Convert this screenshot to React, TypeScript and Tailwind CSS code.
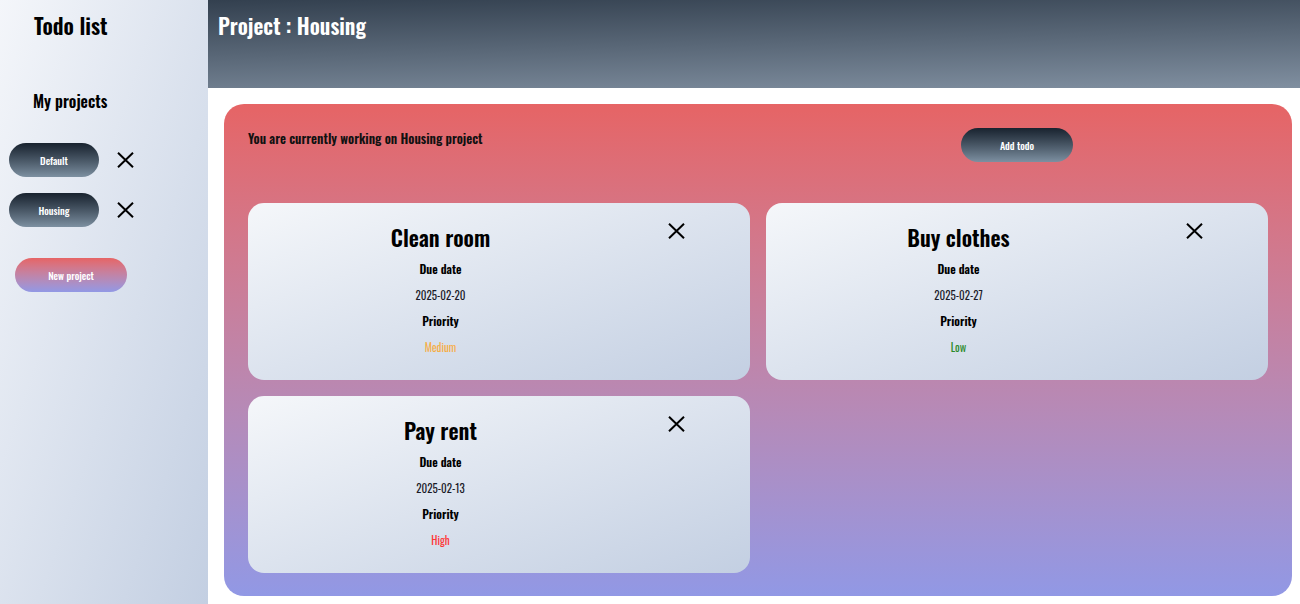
import React from "react";

function XIcon({ className = "" }: { className?: string }) {
  return (
    <svg width="17" height="16" viewBox="0 0 17 16" className={className}>
      <path d="M1 0.8 L16 15.2 M16 0.8 L1 15.2" stroke="#000" strokeWidth="2" fill="none" />
    </svg>
  );
}

const pillDark =
  "bg-linear-to-b from-[#19232f] to-[#7d90a1] text-white rounded-full flex items-center justify-center font-medium";

type Todo = { title: string; date: string; priority: string; color: string };

const todos: Todo[] = [
  { title: "Clean room", date: "2025-02-20", priority: "Medium", color: "text-[#f6ad45]" },
  { title: "Buy clothes", date: "2025-02-27", priority: "Low", color: "text-[#2b8a2b]" },
  { title: "Pay rent", date: "2025-02-13", priority: "High", color: "text-[#ff3535]" },
];

function Card({ t }: { t: Todo }) {
  return (
    <div className="h-[177px] rounded-2xl bg-linear-to-br from-[#f5f7fa] to-[#c3cfe2] flex">
      <div className="w-[385px] flex flex-col items-center pt-[18px]">
        <div className="text-[22px] leading-[32px] font-semibold text-black">{t.title}</div>
        <div className="mt-[3px] h-[26px] leading-[26px] text-[12px] font-semibold text-black">Due date</div>
        <div className="h-[26px] leading-[26px] text-[11px] font-normal text-[#1a1a28]">{t.date}</div>
        <div className="h-[26px] leading-[26px] text-[12px] font-semibold text-black">Priority</div>
        <div className={`h-[26px] leading-[26px] text-[11px] font-normal ${t.color}`}>{t.priority}</div>
      </div>
      <div className="pl-[35px] pt-[20px]">
        <XIcon />
      </div>
    </div>
  );
}

export default function App() {
  return (
    <div className="flex w-[1300px] h-[604px] bg-white font-[family-name:Oswald,'Roboto_Condensed',sans-serif] overflow-hidden">
      <aside className="w-[208px] h-full shrink-0 bg-linear-to-br from-[#f4f6fa] to-[#c3cfe2] flex flex-col">
        <div className="pl-[34px] pt-[10px] text-[22px] leading-[30px] font-semibold text-black">Todo list</div>
        <div className="pl-[33px] mt-[50px] text-[16px] leading-[22px] font-semibold text-black">My projects</div>
        <div className="mt-[31px] flex flex-col gap-[16px] pl-[9px]">
          {["Default", "Housing"].map((p) => (
            <div key={p} className="flex items-center">
              <div className={`${pillDark} w-[90px] h-[34px] text-[10px]`}>{p}</div>
              <XIcon className="ml-[18px]" />
            </div>
          ))}
        </div>
        <div className="ml-[15px] mt-[31px] w-[112px] h-[34px] rounded-full bg-linear-to-b from-[#e66465] to-[#9198e5] text-white text-[10px] font-medium flex items-center justify-center">
          New project
        </div>
      </aside>
      <main className="flex-1 flex flex-col min-h-0">
        <header className="h-[88px] shrink-0 bg-[linear-gradient(178.6deg,#33404f,#808fa0)] pl-[10px] pt-[10px]">
          <div className="text-[21.5px] leading-[30px] font-semibold text-white">Project : Housing</div>
        </header>
        <section className="mt-[16px] ml-[16px] mr-[8px] mb-[8px] flex-1 min-h-0 rounded-[20px] bg-linear-to-b from-[#e66465] to-[#9198e5] px-[24px] pt-[24px]">
          <div className="grid grid-cols-2 gap-x-[16px] h-[75px]">
            <div className="text-[13px] font-semibold text-[#111] leading-[20px]">
              You are currently working on Housing project
            </div>
            <div className="flex justify-center">
              <div className={`${pillDark} w-[112px] h-[34px] text-[10px]`}>Add todo</div>
            </div>
          </div>
          <div className="grid grid-cols-2 gap-[16px]">
            {todos.map((t) => (
              <Card key={t.title} t={t} />
            ))}
          </div>
        </section>
      </main>
    </div>
  );
}
